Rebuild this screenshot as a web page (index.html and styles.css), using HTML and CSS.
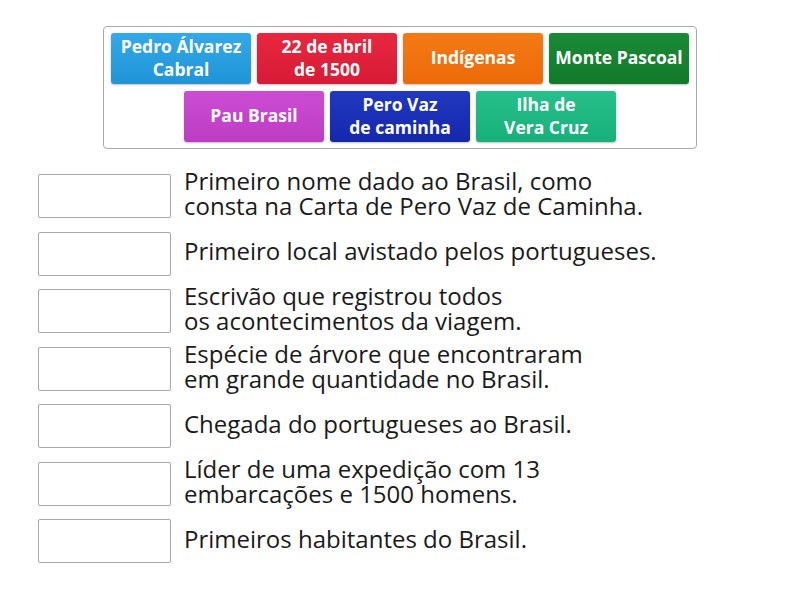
FILE: index.html
```html
<!DOCTYPE html>
<html lang="pt">
<head>
<meta charset="utf-8">
<link rel="stylesheet" href="styles.css">
</head>
<body>
<div class="page">
  <div class="bank">
    <div class="bank-row">
      <div class="tile t-blue">Pedro Álvarez<br>Cabral</div>
      <div class="tile t-red">22 de abril<br>de 1500</div>
      <div class="tile t-orange">Indígenas</div>
      <div class="tile t-green">Monte Pascoal</div>
    </div>
    <div class="bank-row">
      <div class="tile t-magenta">Pau Brasil</div>
      <div class="tile t-navy">Pero Vaz<br>de caminha</div>
      <div class="tile t-teal">Ilha de<br>Vera Cruz</div>
    </div>
  </div>
  <div class="items">
    <div class="item"><div class="slot"></div><div class="desc">Primeiro nome dado ao Brasil, como<br>consta na Carta de Pero Vaz de Caminha.</div></div>
    <div class="item"><div class="slot"></div><div class="desc">Primeiro local avistado pelos portugueses.</div></div>
    <div class="item"><div class="slot"></div><div class="desc">Escrivão que registrou todos<br>os acontecimentos da viagem.</div></div>
    <div class="item"><div class="slot"></div><div class="desc">Espécie de árvore que encontraram<br>em grande quantidade no Brasil.</div></div>
    <div class="item"><div class="slot"></div><div class="desc">Chegada do portugueses ao Brasil.</div></div>
    <div class="item"><div class="slot"></div><div class="desc">Líder de uma expedição com 13<br>embarcações e 1500 homens.</div></div>
    <div class="item"><div class="slot"></div><div class="desc">Primeiros habitantes do Brasil.</div></div>
  </div>
</div>
</body>
</html>
```

FILE: styles.css
```css
html, body {
  margin: 0;
  padding: 0;
  background: #fff;
}
body {
  font-family: "Open Sans", "Noto Sans", sans-serif;
  width: 800px;
  height: 600px;
  overflow: hidden;
}
.page {
  padding-top: 26px;
}
.bank {
  box-sizing: border-box;
  width: 594px;
  margin: 0 auto;
  border: 1px solid #a8a8a8;
  border-radius: 4px;
  padding: 6px 7px;
  display: flex;
  flex-direction: column;
  gap: 7px;
}
.bank-row {
  display: flex;
  justify-content: center;
  gap: 6px;
}
.tile {
  box-sizing: border-box;
  width: 140px;
  height: 51px;
  border-radius: 3px;
  color: #fff;
  font-weight: 700;
  font-size: 17.5px;
  line-height: 23px;
  padding-bottom: 2px;
  display: flex;
  align-items: center;
  justify-content: center;
  text-align: center;
  box-shadow: 0 1px 2px rgba(0,0,0,0.25);
}
.t-blue { background: linear-gradient(#33a9e8, #1f95d8); }
.t-red { background: linear-gradient(#e8283f, #d81a36); }
.t-orange { background: linear-gradient(#f47a16, #ec6a08); }
.t-green { background: linear-gradient(#1a8a36, #117a2a); }
.t-magenta { background: linear-gradient(#cc4cd4, #bc3cc4); }
.t-navy { background: linear-gradient(#2038c0, #1428ac); }
.t-teal { background: linear-gradient(#26c08a, #18b07a); }

.items {
  margin-top: 25px;
  padding-left: 38px;
  display: flex;
  flex-direction: column;
  gap: 13.5px;
}
.item {
  height: 44px;
  display: flex;
  align-items: center;
  gap: 13px;
}
.slot {
  box-sizing: border-box;
  width: 133px;
  height: 44px;
  border: 1px solid #a8a8a8;
  border-radius: 2px;
  background: #fff;
  flex: none;
}
.desc {
  font-size: 24px;
  line-height: 25px;
  margin-bottom: 6px;
  color: #1a1a1a;
  white-space: nowrap;
}
```
